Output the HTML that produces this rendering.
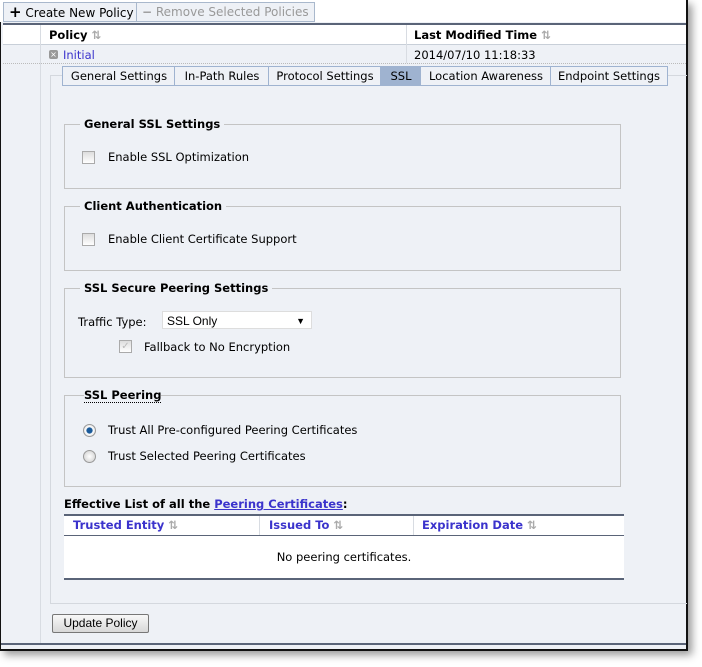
<!DOCTYPE html><html><head><style>
body{margin:0;width:702px;height:667px;background:#fff;font-family:"DejaVu Sans","Liberation Sans",sans-serif;font-size:11.5px;color:#000;position:relative;overflow:hidden}
.a{position:absolute}
.frame{left:0;top:0;width:685px;height:649px;border-right:2px solid #111;border-bottom:2px solid #111;border-left:1px solid #111;background:#eef1f6;box-shadow:4px 4px 8px #999}
.btn{border:1px solid #a9b8cc;background:#eef1f6;height:18px;line-height:18px;padding:0 5px;font-size:12px}
.fs{border:1px solid #c4c4c4;left:64px;width:555px}
.lg{background:#eef1f6;padding:0 4px;font-weight:bold;font-size:11.5px;left:15px;top:-8px}
.cb{width:11px;height:11px;border:1px solid #aaa;background:linear-gradient(#ddd,#fff)}
.tab{top:66px;height:18px;line-height:18px;border:1px solid #9fb3d0;background:#eef1f6;text-align:center;font-size:11.5px}
.rad{width:11px;height:11px;border-radius:50%;border:1px solid #999;background:radial-gradient(#fff,#ccc)}
.th{color:#3b33cc;font-weight:bold;top:518px}
</style></head><body>
<div class="a frame"></div>
<div class="a" style="left:0;top:0;width:686px;height:22px;background:#fff"></div>
<div class="a btn" style="left:3px;top:2px"><b style="font-size:15px">+</b>&nbsp;Create New Policy</div>
<div class="a btn" style="left:136px;top:2px;color:#999"><b>&#x2212;</b> Remove Selected Policies</div>
<div class="a" style="left:3px;top:23px;width:683px;height:2px;background:#5a6478"></div>
<div class="a" style="left:3px;top:25px;width:683px;height:19px;background:#fff;border-bottom:1px solid #c8cfd8"></div>
<div class="a" style="left:40px;top:25px;width:1px;height:620px;background:#d8dce2"></div>
<div class="a" style="left:406px;top:25px;width:1px;height:38px;background:#d8dce2"></div>
<div class="a" style="left:49px;top:28px;font-weight:bold">Policy <span style="color:#aaa">⇅</span></div>
<div class="a" style="left:414px;top:28px;font-weight:bold">Last Modified Time <span style="color:#aaa">⇅</span></div>
<div class="a" style="left:49px;top:50px;width:9px;height:9px;background:#999;border-radius:2px;color:#fff;font-size:8px;line-height:9px;text-align:center">×</div>
<div class="a" style="left:63px;top:48px;color:#3b33cc">Initial</div>
<div class="a" style="left:414px;top:48px">2014/07/10 11:18:33</div>
<div class="a" style="left:3px;top:63px;width:683px;border-top:1px dotted #bbb"></div>
<div class="a" style="left:50px;top:75px;width:636px;height:527px;border-left:1px solid #d4d8de;border-top:1px solid #d4d8de;border-bottom:1px solid #d4d8de"></div>
<div class="a tab" style="left:62px;width:112px">General Settings</div>
<div class="a tab" style="left:174px;width:94px">In-Path Rules</div>
<div class="a tab" style="left:268px;width:112px">Protocol Settings</div>
<div class="a tab" style="left:380px;width:40px;background:#9fb3d0">SSL</div>
<div class="a tab" style="left:420px;width:130px">Location Awareness</div>
<div class="a tab" style="left:550px;width:116px">Endpoint Settings</div>

<div class="a fs" style="top:124px;height:63px"><div class="a lg">General SSL Settings</div>
<div class="a cb" style="left:17px;top:26px"></div><div class="a" style="left:43px;top:25px">Enable SSL Optimization</div></div>
<div class="a fs" style="top:206px;height:63px"><div class="a lg">Client Authentication</div>
<div class="a cb" style="left:17px;top:26px"></div><div class="a" style="left:43px;top:25px">Enable Client Certificate Support</div></div>
<div class="a fs" style="top:288px;height:88px"><div class="a lg">SSL Secure Peering Settings</div>
<div class="a" style="left:13px;top:26px">Traffic Type:</div>
<div class="a" style="left:97px;top:22px;width:150px;height:18px;border:1px solid #ddd;background:#fff;font-family:'Liberation Sans';font-size:12px;line-height:18px;padding-left:4px;box-sizing:border-box">SSL Only<span style="position:absolute;right:6px;font-size:9px">▼</span></div>
<div class="a cb" style="left:54px;top:51px;color:#bbb;font-size:10px;line-height:11px;text-align:center">✓</div><div class="a" style="left:79px;top:51px">Fallback to No Encryption</div></div>
<div class="a fs" style="top:395px;height:90px"><div class="a lg" style="border-bottom:1px dotted #000;padding:0;left:19px;top:-8px">SSL Peering</div>
<div class="a rad" style="left:18px;top:28px;background:radial-gradient(#1a5a9a 35%,#fff 45%,#ccc)"></div><div class="a" style="left:43px;top:27px">Trust All Pre-configured Peering Certificates</div>
<div class="a rad" style="left:18px;top:54px"></div><div class="a" style="left:43px;top:53px">Trust Selected Peering Certificates</div></div>

<div class="a" style="left:64px;top:497px;font-weight:bold">Effective List of all the <span style="color:#3b33cc;text-decoration:underline">Peering Certificates</span>:</div>
<div class="a" style="left:64px;top:514px;width:560px;height:62px;background:#fff;border-top:2px solid #5a6478;border-bottom:2px solid #5a6478"></div>
<div class="a" style="left:64px;top:535px;width:560px;height:1px;background:#5a6478"></div>
<div class="a" style="left:259px;top:516px;width:1px;height:19px;background:#d8dce2"></div>
<div class="a" style="left:413px;top:516px;width:1px;height:19px;background:#d8dce2"></div>
<div class="a th" style="left:73px">Trusted Entity <span style="color:#aaa">⇅</span></div>
<div class="a th" style="left:269px">Issued To <span style="color:#aaa">⇅</span></div>
<div class="a th" style="left:422px">Expiration Date <span style="color:#aaa">⇅</span></div>
<div class="a" style="left:64px;top:550px;width:560px;text-align:center">No peering certificates.</div>

<div class="a" style="left:52px;top:614px;width:95px;height:17px;border:1px solid #777;border-radius:2px;background:linear-gradient(#f8f8f8,#d8d8d8);font-family:'Liberation Sans';font-size:12px;text-align:center;line-height:17px">Update Policy</div>
<div class="a" style="left:1px;top:643px;width:685px;height:2px;background:#5a6478"></div>
</body></html>
